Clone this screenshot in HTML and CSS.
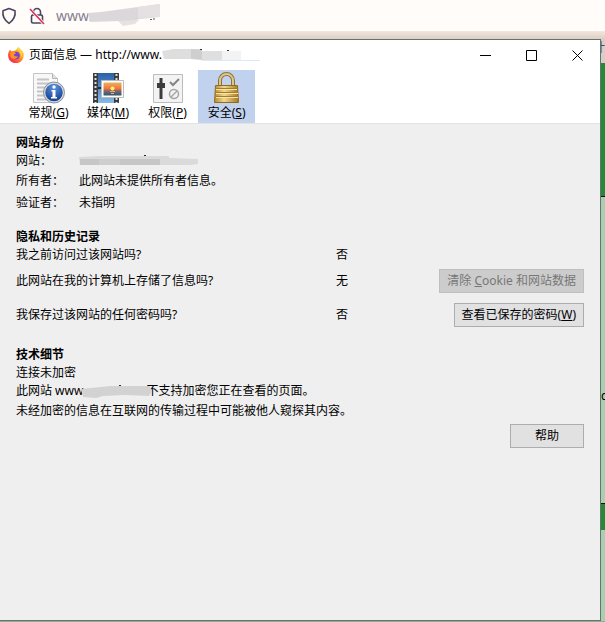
FILE: index.html
```
<!DOCTYPE html>
<html lang="zh-CN">
<head>
  <meta charset="UTF-8">
  <meta name="viewport" content="width=device-width, initial-scale=1.0">
  <title>页面信息</title>
  <link rel="stylesheet" href="styles.css">
</head>
<body>

<div class="urlbar">
  <svg class="url-icon" width="18" height="18" viewBox="0 0 18 18" fill="none" stroke="#4a4560" stroke-width="1.6" stroke-linejoin="round">
    <path d="M9 1.5 15 3.7c.7 5-1.200 9.500-6 12.700C4.200 13.200 2.300 8.700 3 3.700Z"/>
  </svg>
  <svg class="url-icon" width="18" height="18" viewBox="0 0 18 18" fill="none" stroke="#4a4560" stroke-width="1.6">
    <path d="M5.500 8V5a3.500 3.500 0 0 1 7 0v3"/>
    <rect x="3.500" y="8" width="11" height="8" rx="1.500"/>
    <path d="M2 2 16 17" stroke="#fffcf9" stroke-width="3"/>
    <path d="M2 2 16 17" stroke="#e22850" stroke-width="1.500"/>
  </svg>
  <input class="url-input" type="text" value="www." aria-label="网址">
  <svg class="url-mask" width="74" height="24" viewBox="0 0 74 24">
    <path d="M0 9 13 8 35 5 50 3 72 0V13L51 15 38 21 33 17 2 18Z" fill="#dbd7db"/>
    <path d="M50 3 72 0V13L50 14Z" fill="#e5e1e3"/>
    <path d="M30 17 51 16 47 20 35 22Z" fill="#e6e2df"/>
    <path d="M62 15.500h2M66 14v2" stroke="#5a5570"/>
  </svg>
</div>

<div class="desktop">
  <div class="dialog">
    <div class="titlebar">
      <svg width="16" height="16" viewBox="0 0 16 16">
        <defs>
          <linearGradient id="fox" x1="1" y1="0" x2="0" y2="1">
            <stop offset="0" stop-color="#fff044"/>
            <stop offset=".4" stop-color="#ff9820"/>
            <stop offset=".75" stop-color="#ff4040"/>
            <stop offset="1" stop-color="#e42080"/>
          </linearGradient>
        </defs>
        <path d="M10.500 0c1 2 4 3 5 6 1 5-2 10-7.500 10S-.3 12 .2 7C.4 5 1.300 3.500 2.200 2.400L3 4.200 5.800 4C7 3.500 8.500 3 9 2 9.300 1.300 9.800.7 10.500 0Z" fill="url(#fox)"/>
        <circle cx="8" cy="8.600" r="3.800" fill="#7542d8"/>
        <path d="M2.500 5C5 4 7 5 8 6.500L5.800 7.500C6 9.500 8.500 10 10 9c-1 3-5 4-7 1.500C2 9 2 7 2.500 5Z" fill="#ff9220"/>
        <path d="M9 2c3 2 5 5 3.500 9C15 9 15 4.500 10.500.8Z" fill="#ffd93a"/>
      </svg>
      <span class="title">页面信息 — http://www.</span>
      <svg class="title-mask" width="98" height="14" viewBox="0 0 98 14">
        <path d="M0 3 12 1H40V11H2Z" fill="#dedede"/>
        <path d="M29 1 40 2V12L29 11Z" fill="#cfcfcf"/>
        <path d="M40 3H60V12H40Z" fill="#dfdfdf"/>
        <path d="M60 3H79V12H60Z" fill="#f3f3f3"/>
        <path d="M40 12.500H98" stroke="#dce8f5"/>
        <path d="M38 1.500h2M65 2.500h2" stroke="#333"/>
      </svg>
      <div class="window-buttons">
        <button type="button" aria-label="最小化"><svg width="11" height="11" viewBox="0 0 11 11"><path d="M0 5.500h11" stroke="#000"/></svg></button>
        <button type="button" aria-label="最大化"><svg width="11" height="11" viewBox="0 0 11 11"><path d="M.5.500h10v10H.5Z" fill="none" stroke="#000"/></svg></button>
        <button type="button" aria-label="关闭"><svg width="11" height="11" viewBox="0 0 11 11"><path d="m.5.500 10 10m0-10-10 10" stroke="#000"/></svg></button>
      </div>
    </div>

    <div class="tabs">
      <button type="button" class="tab">
        <svg width="32" height="32" viewBox="0 0 32 32">
          <defs>
            <radialGradient id="info" cx=".5" cy=".2" r=".8">
              <stop offset="0" stop-color="#5c94dc"/>
              <stop offset="1" stop-color="#123f92"/>
            </radialGradient>
          </defs>
          <path d="M.5 1.500h19l5 5v24H.5Z" fill="#f8f8f8" stroke="#c4c4c4"/>
          <path d="M19.500 1.500v5h5" fill="#e2e2e2" stroke="#b5b5b5"/>
          <path d="M4 7.500h12M4 11.500h16M4 15.500h9M4 19.500h7M4 23.500h7M4 27.500h10" stroke="#c4c4c4" stroke-width="2"/>
          <circle cx="21" cy="20.500" r="10.500" fill="#d5d7db" stroke="#8b919b"/>
          <circle cx="21" cy="20.500" r="8.700" fill="url(#info)"/>
          <circle cx="21" cy="15" r="1.700" fill="#fff"/>
          <path d="M18.500 18h4v7h1.500v1.500h-6V25h1.500v-5.500h-1Z" fill="#fff"/>
        </svg>
        <span>常规(<u>G</u>)</span>
      </button>
      <button type="button" class="tab">
        <svg width="32" height="32" viewBox="0 0 32 32">
          <defs>
            <linearGradient id="film" x1="0" y1="0" x2="0" y2="1">
              <stop offset="0" stop-color="#2860aa"/>
              <stop offset="1" stop-color="#88b9e6"/>
            </linearGradient>
            <linearGradient id="sunset" x1="0" y1="0" x2="0" y2="1">
              <stop offset="0" stop-color="#e8b45c"/>
              <stop offset=".5" stop-color="#f2703a"/>
              <stop offset=".62" stop-color="#8a6a68"/>
              <stop offset="1" stop-color="#2c5672"/>
            </linearGradient>
          </defs>
          <path d="M1 1h26v30H1Z" fill="#3b3d40"/>
          <path d="M6 1h16v30H6Z" fill="url(#film)"/>
          <path d="M6 16h16" stroke="#252a32" stroke-width="2"/>
          <path d="M3.500 2v29M24.500 2v29" stroke="#ddd" stroke-width="2" stroke-dasharray="2 2"/>
          <path d="M9.500 8.500h22v17h-22Z" fill="#fff" stroke="#bbb"/>
          <path d="M11.500 10.500h18v13h-18Z" fill="url(#sunset)"/>
          <circle cx="20.500" cy="16.500" r="2" fill="#fff17a"/>
          <path d="M18 19.500h5M19 21.500h3" stroke="#f2ae62"/>
        </svg>
        <span>媒体(<u>M</u>)</span>
      </button>
      <button type="button" class="tab">
        <svg width="32" height="32" viewBox="0 0 32 32">
          <path d="M1.500 2.500h29v28h-29Z" fill="#f3f3f3" stroke="#bcbcbc"/>
          <path d="M9 6v21" stroke="#3c3c3c" stroke-width="3"/>
          <path d="M5 11h8v5H5Z" fill="#3c3c3c"/>
          <path d="m18 10 3 3 6-6" fill="none" stroke="#858585" stroke-width="2"/>
          <circle cx="22" cy="22" r="4.500" fill="none" stroke="#a5a5a5" stroke-width="1.500"/>
          <path d="m19 25 6-6" stroke="#a5a5a5" stroke-width="1.500"/>
        </svg>
        <span>权限(<u>P</u>)</span>
      </button>
      <button type="button" class="tab active">
        <svg width="32" height="32" viewBox="0 0 32 32">
          <defs>
            <linearGradient id="brass" x1="0" y1="0" x2="1" y2="0">
              <stop offset="0" stop-color="#b88b32"/>
              <stop offset=".4" stop-color="#efd98b"/>
              <stop offset="1" stop-color="#a87824"/>
            </linearGradient>
          </defs>
          <path d="M9 15V8.500a6.500 6.500 0 0 1 13 0V15" fill="none" stroke="#8c713c" stroke-width="4"/>
          <path d="M9 15V8.500a6.500 6.500 0 0 1 13 0V15" fill="none" stroke="#dcc78c" stroke-width="2"/>
          <path d="M4.500 13.500h22l1 17h-24Z" fill="url(#brass)" stroke="#936a20"/>
          <path d="M5 16.500h21M5 20.500h22M5 24.500h22" stroke="#a87a2b"/>
          <path d="M5 17.500h21M5 21.500h22M5 25.500h22" stroke="#f5e4a4"/>
        </svg>
        <span>安全(<u>S</u>)</span>
      </button>
    </div>

    <div class="panel">
      <section>
        <h2>网站身份</h2>
        <table class="identity">
          <tr>
            <th>网站：</th>
            <td>
              <svg class="site-mask" width="120" height="12" viewBox="0 0 120 12">
                <path d="M0 2 20 1H90V3L119 4V9L112 10H1Z" fill="#dadada"/>
                <path d="M1 4H20V10H1ZM41 4H81V10H41Z" fill="#c6c6c6"/>
                <path d="M20 4H41V10H20Z" fill="#cecece"/>
                <path d="M65 .5h2" stroke="#222"/>
              </svg>
            </td>
          </tr>
          <tr><th>所有者：</th><td>此网站未提供所有者信息。</td></tr>
          <tr><th>验证者：</th><td>未指明</td></tr>
        </table>
      </section>

      <section>
        <h2>隐私和历史记录</h2>
        <table class="privacy">
          <tr><th>我之前访问过该网站吗?</th><td>否</td><td></td></tr>
          <tr class="tall"><th>此网站在我的计算机上存储了信息吗?</th><td>无</td><td class="action"><button type="button" class="btn" disabled>清除 <u>C</u>ookie 和网站数据</button></td></tr>
          <tr class="tall"><th>我保存过该网站的任何密码吗?</th><td>否</td><td class="action"><button type="button" class="btn">查看已保存的密码(<u>W</u>)</button></td></tr>
        </table>
      </section>

      <section class="details">
        <h2>技术细节</h2>
        <p>连接未加密</p>
        <p>此网站 www<svg class="text-mask" width="73" height="14" viewBox="0 0 73 14"><path d="M0 4 20 2 30 1H68L71 5 68 11 44 10 22 11 15 13 2 12Z" fill="#d2d2d2"/><path d="M38 .5h2" stroke="#333"/></svg>不支持加密您正在查看的页面。</p>
        <p class="last">未经加密的信息在互联网的传输过程中可能被他人窥探其内容。</p>
      </section>

      <div class="footer">
        <button type="button" class="btn help">帮助</button>
      </div>
    </div>
  </div>

  <div class="page-edge">
    <div class="edge-top">计</div>
    <div class="edge-banner"></div>
    <div class="edge-body">d</div>
    <div class="edge-bar"></div>
  </div>
</div>

</body>
</html>
```
FILE: styles.css
```
* {
  box-sizing: border-box;
}
body {
  margin: 0;
  height: 100vh;
  display: flex;
  flex-direction: column;
  overflow: hidden;
  background: #b1d6b9;
  color: #000;
  font-family: "Noto Sans", "Noto Sans CJK SC", sans-serif;
  font-size: 12px;
  line-height: 18px;
}
button, input {
  font: inherit;
  color: inherit;
}
svg {
  flex: none;
}

/* browser behind the dialog */
.urlbar {
  position: relative;
  flex: none;
  display: flex;
  align-items: center;
  height: 31px;
  background: #fffcf9;
}
.url-icon {
  margin-right: 10px;
}
.url-input {
  flex: 1;
  min-width: 0;
  padding: 0;
  border: 0;
  outline: 0;
  background: none;
  color: #85808f;
  font-size: 14px;
}
.url-mask {
  position: absolute;
  left: 88px;
  top: 4px;
}
.desktop {
  flex: 1;
  display: flex;
  min-height: 0;
  padding: 8px 0 1px;
  background: linear-gradient(#f3e6dc, #dccfc5 8px, #8fae98 9px);
}
.page-edge {
  flex: none;
  display: flex;
  flex-direction: column;
  width: 4px;
  overflow: hidden;
  background: #a9cfb2;
}
.edge-top {
  display: flex;
  justify-content: flex-end;
  height: 24px;
  background: #d9cdc4;
  color: #4a4560;
}
.edge-banner {
  height: 134px;
  background: #26893a;
  border-bottom: 1px solid #111;
}
.edge-body {
  height: 306px;
  padding-top: 190px;
}
.edge-bar {
  height: 27px;
  background: #26893a;
  border-top: 1px solid #111;
}

/* dialog */
.dialog {
  flex: 1;
  display: flex;
  flex-direction: column;
  min-width: 0;
  background: #fff;
  border: 1px solid #66736b;
  border-left: 0;
}
.titlebar {
  display: flex;
  align-items: center;
  height: 30px;
  padding-left: 8px;
}
.title {
  margin-left: 5px;
  white-space: nowrap;
}
.window-buttons {
  display: flex;
  margin-left: auto;
}
.window-buttons button {
  display: flex;
  align-items: center;
  justify-content: center;
  width: 46px;
  height: 28px;
  padding: 0;
  border: 0;
  background: none;
}
.tabs {
  display: flex;
  gap: 2px;
  padding-left: 20px;
  border-bottom: 1px solid #e3e3e3;
}
.tab {
  display: flex;
  flex-direction: column;
  align-items: center;
  min-width: 57px;
  height: 53px;
  padding: 2px 8px 0;
  border: 0;
  background: none;
}
.tab.active {
  background: #c1d2ee;
}

.panel {
  flex: 1;
  padding: 10px 16px;
  background: #efefef;
}
section {
  margin-bottom: 14px;
}
.details {
  margin-bottom: 2px;
}
h2, p {
  margin: 0;
  font-size: 12px;
}
table {
  border-collapse: collapse;
}
th, td {
  padding: 0;
  height: 22px;
  font-weight: normal;
  text-align: left;
}
tr:first-child th, tr:first-child td {
  height: 18px;
}
.identity th {
  width: 63px;
}
.site-mask {
  display: block;
}
.privacy {
  width: 100%;
}
.privacy th {
  width: 320px;
}
.privacy .tall td {
  height: 34px;
}
.action {
  text-align: right;
}
/* lies over the end of the host name and the next character */
.text-mask {
  position: relative;
  margin: 0 -8px 0 -2px;
  vertical-align: middle;
}
.last {
  line-height: 22px;
}
.btn {
  height: 24px;
  padding: 0 7px;
  border: 1px solid #adadad;
  background: #e1e1e1;
  line-height: 20px;
  white-space: nowrap;
}
.btn:disabled {
  background: #ccc;
  border-color: #bfbfbf;
  color: #777;
}
.footer {
  display: flex;
  justify-content: flex-end;
}
.help {
  width: 74px;
}
```
